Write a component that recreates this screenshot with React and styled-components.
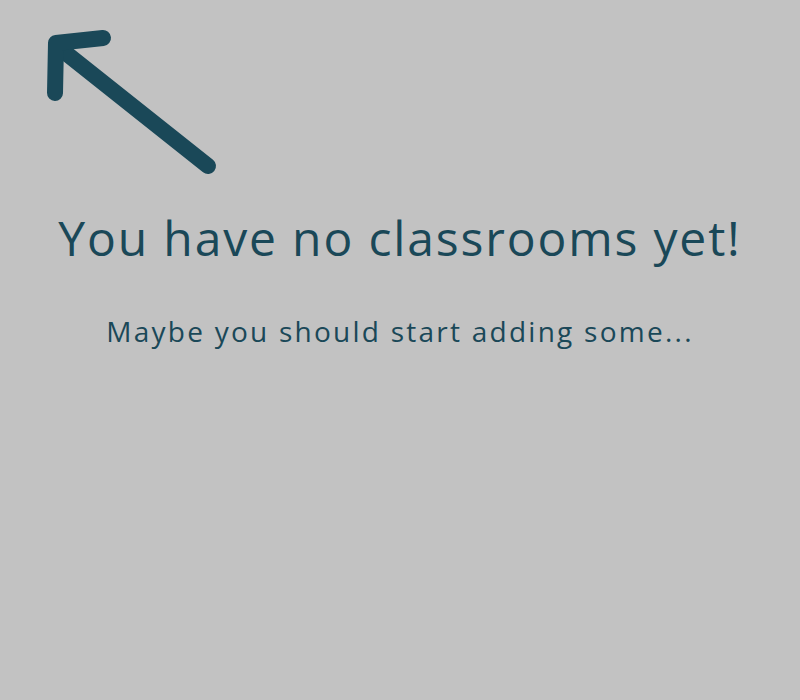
import React from 'react'
import styled, { createGlobalStyle } from 'styled-components'

const GlobalStyle = createGlobalStyle`
  html, body {
    margin: 0;
    padding: 0;
    background: #c2c2c2;
  }
  body {
    font-family: 'Open Sans', 'Liberation Sans', sans-serif;
  }
`

const Page = styled.div`
  box-sizing: border-box;
  width: 800px;
  height: 700px;
  background: #c2c2c2;
  color: #1a4858;
  display: flex;
  flex-direction: column;
  align-items: center;
  padding-top: 28px;
`

const ArrowRow = styled.div`
  align-self: stretch;
  height: 150px;
  padding-left: 44px;
`

const Title = styled.h1`
  margin: 32px 0 0;
  font-size: 48px;
  font-weight: 500;
  line-height: 56px;
  letter-spacing: 1.85px;
`

const Subtitle = styled.p`
  margin: 48px 0 0;
  font-size: 28px;
  font-weight: 500;
  line-height: 34px;
  letter-spacing: 2.25px;
`

const Arrow = () => (
  <svg width="180" height="150" viewBox="44 28 180 150">
    <g fill="none" stroke="#1a4858" strokeWidth="16" strokeLinecap="round" strokeLinejoin="round">
      <path d="M208 166 L62 50" />
      <path d="M55 93 L56 43 L103 38" />
    </g>
  </svg>
)

export default function App() {
  return (
    <Page>
      <GlobalStyle />
      <ArrowRow>
        <Arrow />
      </ArrowRow>
      <Title>You have no classrooms yet!</Title>
      <Subtitle>Maybe you should start adding some...</Subtitle>
    </Page>
  )
}
